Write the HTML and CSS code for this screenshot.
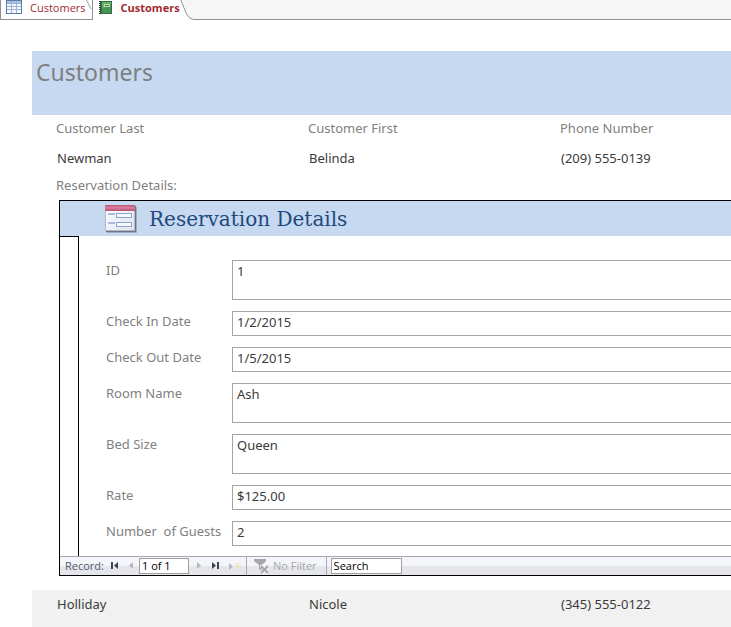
FILE: index.html
```html
<!DOCTYPE html>
<html lang="en">
<head>
<meta charset="utf-8">
<title>Customers</title>
<link rel="stylesheet" href="styles.css">
</head>
<body>
<nav class="tabs">
  <button class="tab" type="button">
    <svg class="tab-icon" width="16" height="14" viewBox="0 0 16 14" aria-hidden="true">
      <rect width="16" height="14" fill="#5d7cab"/>
      <rect x="1" y="1" width="14" height="12" fill="#9db3d6"/>
      <path fill="#a8c1e3" d="M1 1h4v2H1zM6 1h4v2H6zM11 1h4v2h-4z"/>
      <path fill="#f4f8fe" d="M1 4h4v2H1zM6 4h4v2H6zM11 4h4v2h-4zM1 7h4v2H1zM6 7h4v2H6zM11 7h4v2h-4zM1 10h4v3H1zM6 10h4v3H6zM11 10h4v3h-4z"/>
    </svg>
    <span>Customers</span>
    <svg class="tab-slant" width="6" height="19" viewBox="0 0 6 19" aria-hidden="true"><path fill="none" stroke="#9da0a6" d="M0 -1L5 9"/></svg>
  </button>
  <button class="tab tab-active" type="button">
    <svg class="tab-icon" width="14" height="14" viewBox="0 0 14 14" aria-hidden="true">
      <rect x="1" y="1" width="12" height="13" fill="#2f7040"/>
      <rect x="3" y="2" width="9" height="11" fill="#69ae65"/>
      <path fill="#469353" d="M3 9l9-5v9H3z"/>
      <rect x="5" y="4" width="6" height="3" fill="#b9dfaa"/>
      <rect x="6" y="5" width="4" height="1" fill="#438249"/>
      <path stroke="#303b34" stroke-width="2" stroke-dasharray="1 1" d="M1 1v13"/>
    </svg>
    <span>Customers</span>
  </button>
  <div class="tab-rest">
    <svg width="20" height="20" viewBox="0 0 20 20" aria-hidden="true"><path fill="#fff" d="M0 0h2l6 15q2 4 6 4h6v1H0z"/><path fill="none" stroke="#8d9096" d="M0-2L6.500 14q3 5.500 7 5.500h7"/></svg>
  </div>
</nav>

<main class="report">
  <header class="report-header"><h1>Customers</h1></header>

  <section class="record">
    <div class="columns column-labels"><span>Customer Last</span><span>Customer First</span><span>Phone Number</span></div>
    <div class="columns column-values"><span>Newman</span><span>Belinda</span><span>(209) 555-0139</span></div>
    <div class="subform-label">Reservation Details:</div>

    <form class="subform">
      <header class="subform-header">
        <svg width="32" height="28" viewBox="0 0 32 28" aria-hidden="true">
          <defs>
            <linearGradient id="paper" x2="1" y2="1"><stop stop-color="#fff"/><stop offset="1" stop-color="#dfe3ef"/></linearGradient>
            <linearGradient id="band" x2="0" y2="1"><stop stop-color="#b85473"/><stop offset=".45" stop-color="#dc819c"/><stop offset="1" stop-color="#b64f70"/></linearGradient>
          </defs>
          <rect x="2" y="2" width="30" height="26" rx="1" fill="#9dabc6"/>
          <rect x="1" y="1" width="30" height="26" fill="#6d7586"/>
          <rect x=".5" y=".5" width="29" height="25" fill="url(#paper)" stroke="#b7b5c5"/>
          <rect width="30" height="6" fill="url(#band)"/>
          <path stroke="#a9bada" stroke-width="2" d="M3 9h7M3 18h7"/>
          <rect x="11.500" y="8.500" width="15" height="4" fill="#f5f8ff" stroke="#8ca2cf"/>
          <rect x="11.500" y="17.500" width="15" height="4" fill="#f5f8ff" stroke="#8ca2cf"/>
        </svg>
        <h2>Reservation Details</h2>
      </header>
      <div class="subform-body">
        <div class="selector"></div>
        <div class="fields">
          <label for="id">ID</label><textarea class="tall" id="id">1</textarea>
          <label for="in">Check In Date</label><input id="in" value="1/2/2015">
          <label for="out">Check Out Date</label><input id="out" value="1/5/2015">
          <label for="room">Room Name</label><textarea class="tall" id="room">Ash</textarea>
          <label for="bed">Bed Size</label><textarea class="tall" id="bed">Queen</textarea>
          <label for="rate">Rate</label><input id="rate" value="$125.00">
          <label for="guests">Number&nbsp; of Guests</label><input id="guests" value="2">
        </div>
      </div>
      <footer class="navigator">
        <label class="record-label" for="position">Record:</label>
        <button class="step" type="button" aria-label="First record"><svg width="8" height="8" viewBox="0 0 8 8"><path fill="#3f4350" d="M0 0h2v7H0zM7 0v7L3 3.500z"/></svg></button>
        <button class="step" type="button" aria-label="Previous record" disabled><svg width="8" height="8" viewBox="0 0 8 8"><path fill="#b5b7bd" d="M5 0v7L1 3.500z"/></svg></button>
        <input class="position" id="position" value="1 of 1">
        <button class="step step-next" type="button" aria-label="Next record" disabled><svg width="8" height="8" viewBox="0 0 8 8"><path fill="#b5b7bd" d="M2 0v7l4-3.500z"/></svg></button>
        <button class="step" type="button" aria-label="Last record"><svg width="8" height="8" viewBox="0 0 8 8"><path fill="#3f4350" d="M5 0h2v7H5zM0 0v7l4-3.500z"/></svg></button>
        <button class="step" type="button" aria-label="New record" disabled><svg width="13" height="9" viewBox="0 0 13 9"><path fill="#b5b7bd" d="M0 1v7l4-3.500z"/><path fill="none" stroke="#eee3b8" d="M5 4.500h8M8.500 1v7M6 1.500l6 6M12 1.500l-6 6"/></svg></button>
        <button class="filter" type="button" disabled>
          <svg width="16" height="15" viewBox="0 0 16 15" aria-hidden="true"><path fill="#a6a6aa" d="M0 0h12v2L8 6v6L5 10V6L0 2z"/><path stroke="#f0f1f5" stroke-width="4" d="M7 6l7 8M14 7l-7 7"/><path stroke="#a6a6aa" stroke-width="2" d="M7 7l7 7M14 7l-7 7"/></svg>
          <span>No Filter</span>
        </button>
        <input class="search" aria-label="Search records" value="Search">
      </footer>
    </form>
  </section>

  <section class="record record-alt">
    <div class="columns column-values"><span>Holliday</span><span>Nicole</span><span>(345) 555-0122</span></div>
    <div class="subform-label">Reservation Details:</div>
  </section>
</main>
</body>
</html>
```
FILE: styles.css
```css
* { box-sizing: border-box; }

body {
  margin: 0;
  height: 100vh;
  overflow: hidden;
  background: #fff;
  color: #3b3b3b;
  font: 13px/20px "Noto Sans", "Open Sans", sans-serif;
}

h1, h2 { margin: 0; font-weight: 400; }

button, input, textarea {
  margin: 0;
  padding: 0;
  border: 0;
  border-radius: 0;
  background: none;
  color: inherit;
  font: inherit;
}

svg { display: block; flex: none; }

.tabs {
  display: flex;
  height: 20px;
  font: 11px/16px "Open Sans", "Noto Sans", sans-serif;
  color: #a12b31;
}

.tab {
  display: flex;
  align-items: flex-start;
  gap: 8px;
  height: 20px;
  padding-left: 5px;
  border: solid #8d9096;
  border-width: 0 1px 1px;
}

.tab-slant { margin-left: -8px; }

.tab-active {
  padding-left: 6px;
  border: 0;
  font-weight: 700;
}

.tab-rest {
  flex: 1;
  background: #f6f6f6;
  border-bottom: 1px solid #8d9096;
}

.report { margin: 31px 0 0 32px; }

.report-header {
  height: 64px;
  padding: 3px 4px;
  background: #c6d9f1;
  color: #7f7f7f;
}

.report-header h1 { font-size: 23px; line-height: 36px; }

.columns {
  display: grid;
  grid-template-columns: 252px 252px 1fr;
  white-space: nowrap;
}

.column-labels { padding: 3px 0 6px 24px; color: #7f7f7f; }
.column-values { padding: 4px 0 5px 25px; }

.subform-label {
  padding: 2px 0 5px 24px;
  color: #7f7f7f;
}

.subform {
  margin-left: 27px;
  border: solid #000;
  border-width: 1px 0 1px 1px;
}

.subform-header {
  display: flex;
  align-items: center;
  gap: 12px;
  height: 35px;
  padding: 1px 0 0 45px;
  background: #c6d9f1;
  color: #1f497d;
}

.subform-header h2 {
  font: 20px/32px "DejaVu Serif", serif;
}

.subform-body { display: flex; }

.selector {
  width: 19px;
  border: solid #000;
  border-width: 1px 1px 0 0;
}

.fields {
  flex: 1;
  display: grid;
  grid-template-columns: 126px 1fr;
  row-gap: 11px;
  padding: 24px 0 10px 27px;
}

.fields label { color: #7f7f7f; white-space: nowrap; }

.fields input, .fields textarea {
  width: 100%;
  height: 25px;
  padding: 0 4px 3px;
  border: solid #a5a5a5;
  border-width: 1px 0 1px 1px;
  resize: none;
}

.fields .tall { height: 40px; }

.navigator {
  display: flex;
  align-items: center;
  height: 19px;
  padding-left: 5px;
  border-top: 1px solid #a5a8b3;
  background: linear-gradient(#f4f5f9 50%, #e4e6ec 50%);
  font: 11px/14px "Open Sans", sans-serif;
}

.record-label { width: 46px; color: #53586a; }

.step { width: 17px; }
.step-next { margin-left: 6px; }

.position, .search {
  height: 16px;
  padding: 0 2px 1px;
  border: 1px solid #a0a0a0;
  background: #fff;
  color: #000;
}

.position { width: 50px; margin-left: -6px; }

.filter {
  display: flex;
  align-items: center;
  gap: 3px;
  height: 18px;
  padding: 0 9px 0 7px;
  border: solid #a5a8b3;
  border-width: 0 1px;
  color: #a6a6aa;
}

.search { width: 71px; margin-left: 4px; }

.record-alt {
  margin-top: 14px;
  height: 60px;
  background: #f1f1f1;
}

.record-alt .column-values { padding-bottom: 6px; }
```
